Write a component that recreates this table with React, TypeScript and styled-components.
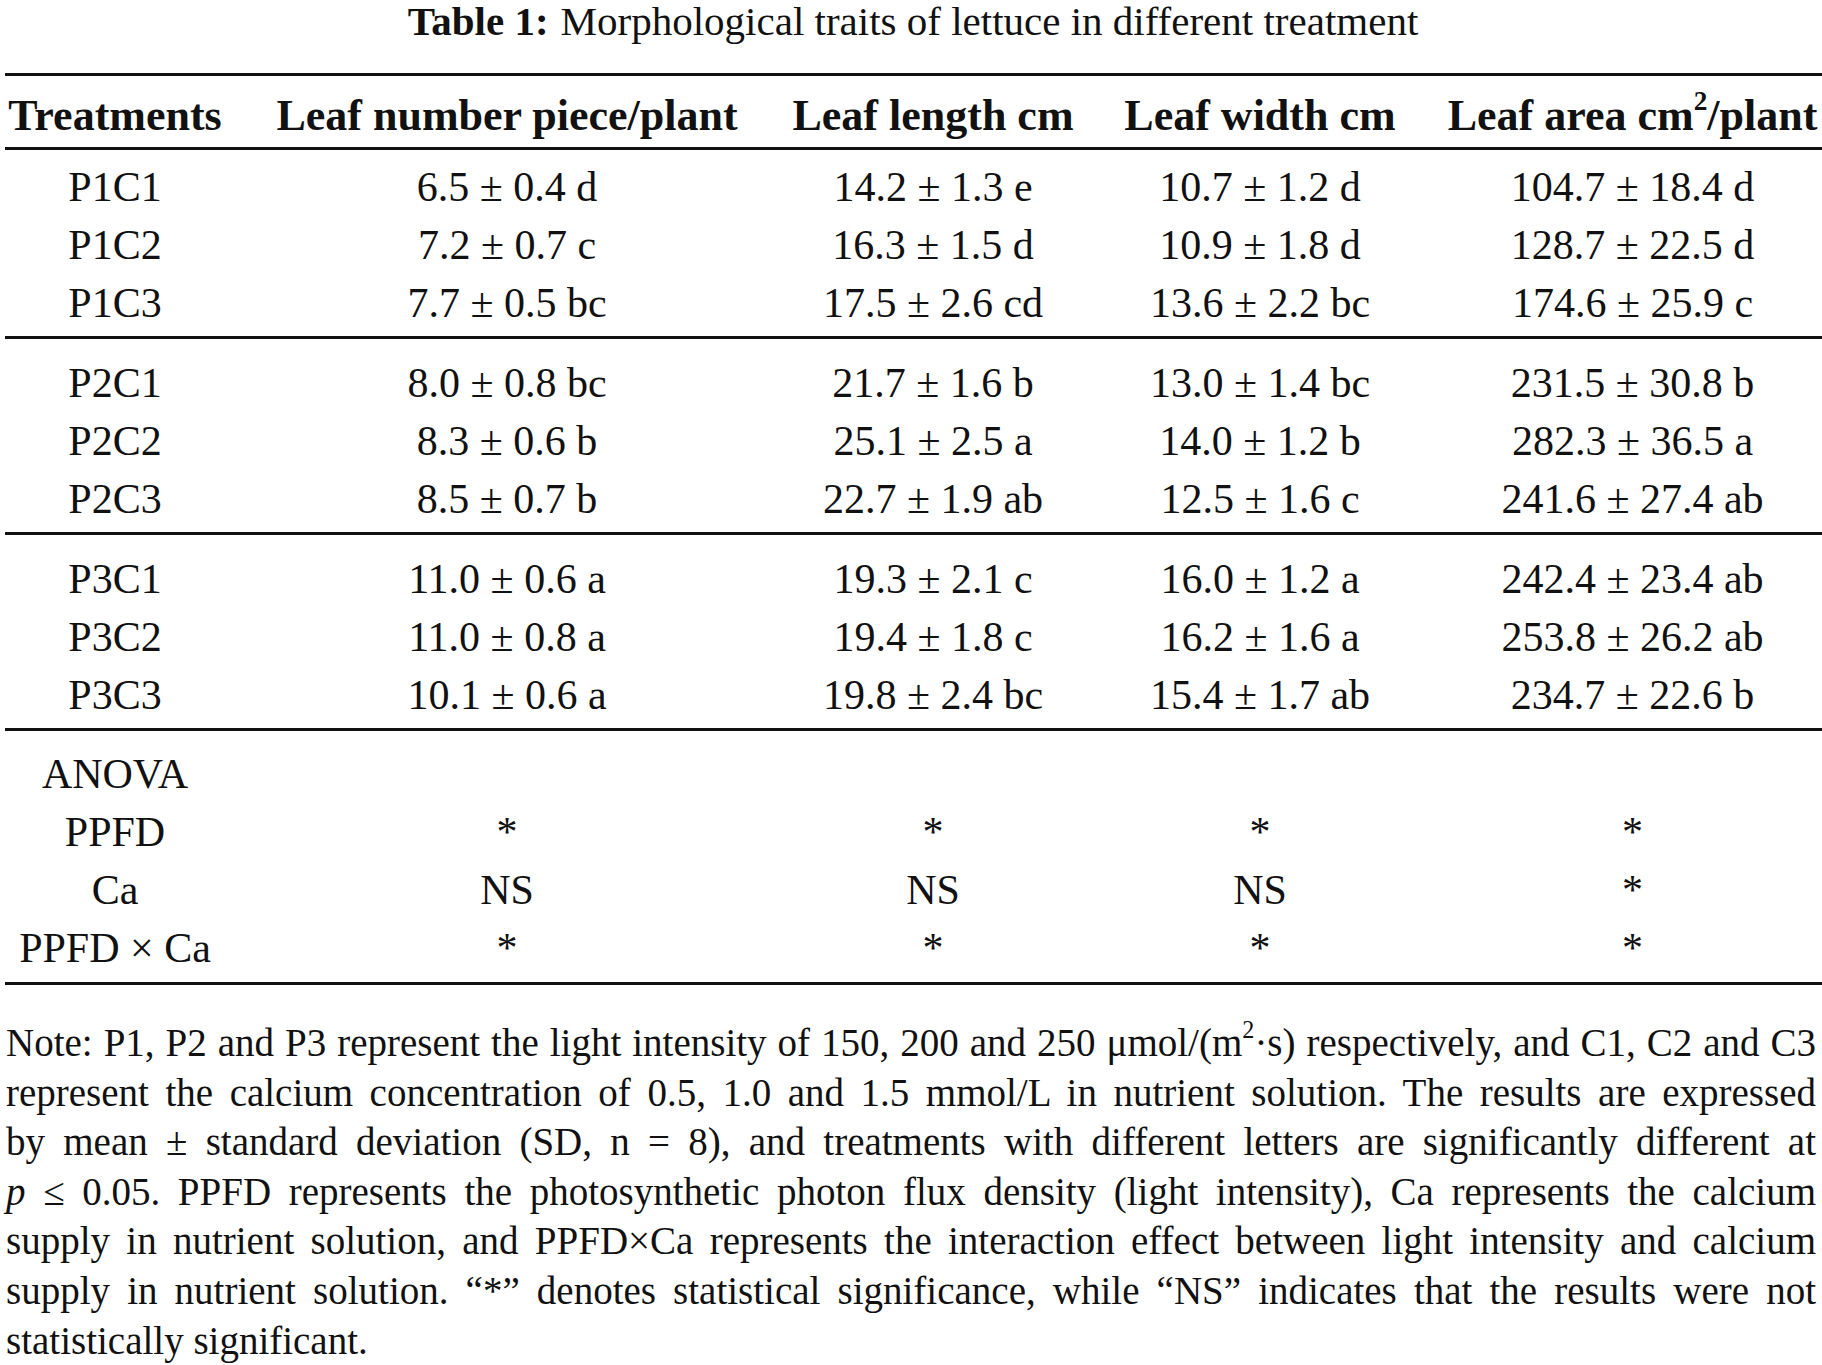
import { createGlobalStyle } from 'styled-components';
import styled from 'styled-components';

const GlobalStyle = createGlobalStyle`
  html, body {
    margin: 0;
    padding: 0;
    background: #fff;
  }
  body {
    font-family: "Liberation Serif", "Times New Roman", serif;
    color: #111;
  }
`;

const RULE = '3px solid #111';
const COLUMNS = '220px 564px 288px 366px 1fr';

const S = {
  Page: styled.div`
    width: 1822px;
    background: #fff;
  `,

  Title: styled.div`
    height: 42px;
    line-height: 42px;
    font-size: 41px;
    text-align: center;
    padding-left: 4px;
  `,

  TitleLabel: styled.span`
    font-weight: bold;
    margin-right: 12px;
  `,

  Table: styled.div`
    margin-top: 31px;
    margin-left: 5px;
    border-top: ${RULE};
  `,

  HeadRow: styled.div`
    display: grid;
    grid-template-columns: ${COLUMNS};
    height: 74px;
    box-sizing: border-box;
    padding-top: 6px;
    line-height: 68px;
    font-size: 44px;
    font-weight: bold;
    border-bottom: ${RULE};
    white-space: nowrap;
  `,

  Group: styled.div<{ $top: number; $bottom: number }>`
    padding-top: ${({ $top }) => $top}px;
    padding-bottom: ${({ $bottom }) => $bottom}px;
    border-bottom: ${RULE};
  `,

  Row: styled.div`
    display: grid;
    grid-template-columns: ${COLUMNS};
    height: 58px;
    line-height: 56px;
    font-size: 42px;
    white-space: nowrap;
  `,

  Cell: styled.div`
    text-align: center;
  `,

  Sup: styled.sup`
    font-size: 0.62em;
    line-height: 0;
    vertical-align: 0.75em;
  `,

  Note: styled.div`
    margin-top: 33px;
    padding: 0 6px;
    font-size: 39px;
    line-height: 49.6px;
  `,

  NoteLine: styled.div<{ $last?: boolean }>`
    text-align: ${({ $last }) => ($last ? 'left' : 'justify')};
    text-align-last: ${({ $last }) => ($last ? 'left' : 'justify')};
    white-space: nowrap;
  `,
};

type Group = { top: number; bottom: number; rows: string[][] };

const groups: Group[] = [
  {
    top: 9,
    bottom: 3,
    rows: [
      ['P1C1', '6.5 ± 0.4 d', '14.2 ± 1.3 e', '10.7 ± 1.2 d', '104.7 ± 18.4 d'],
      ['P1C2', '7.2 ± 0.7 c', '16.3 ± 1.5 d', '10.9 ± 1.8 d', '128.7 ± 22.5 d'],
      ['P1C3', '7.7 ± 0.5 bc', '17.5 ± 2.6 cd', '13.6 ± 2.2 bc', '174.6 ± 25.9 c'],
    ],
  },
  {
    top: 16,
    bottom: 3,
    rows: [
      ['P2C1', '8.0 ± 0.8 bc', '21.7 ± 1.6 b', '13.0 ± 1.4 bc', '231.5 ± 30.8 b'],
      ['P2C2', '8.3 ± 0.6 b', '25.1 ± 2.5 a', '14.0 ± 1.2 b', '282.3 ± 36.5 a'],
      ['P2C3', '8.5 ± 0.7 b', '22.7 ± 1.9 ab', '12.5 ± 1.6 c', '241.6 ± 27.4 ab'],
    ],
  },
  {
    top: 16,
    bottom: 3,
    rows: [
      ['P3C1', '11.0 ± 0.6 a', '19.3 ± 2.1 c', '16.0 ± 1.2 a', '242.4 ± 23.4 ab'],
      ['P3C2', '11.0 ± 0.8 a', '19.4 ± 1.8 c', '16.2 ± 1.6 a', '253.8 ± 26.2 ab'],
      ['P3C3', '10.1 ± 0.6 a', '19.8 ± 2.4 bc', '15.4 ± 1.7 ab', '234.7 ± 22.6 b'],
    ],
  },
  {
    top: 15,
    bottom: 4,
    rows: [
      ['ANOVA', '', '', '', ''],
      ['PPFD', '*', '*', '*', '*'],
      ['Ca', 'NS', 'NS', 'NS', '*'],
      ['PPFD × Ca', '*', '*', '*', '*'],
    ],
  },
];

const App = () => (
  <S.Page>
    <GlobalStyle />
    <S.Title>
      <S.TitleLabel>Table 1:</S.TitleLabel>
      Morphological traits of lettuce in different treatment
    </S.Title>

    <S.Table>
      <S.HeadRow>
        <S.Cell>Treatments</S.Cell>
        <S.Cell>Leaf number piece/plant</S.Cell>
        <S.Cell>Leaf length cm</S.Cell>
        <S.Cell>Leaf width cm</S.Cell>
        <S.Cell>
          Leaf area cm
          <S.Sup>2</S.Sup>
          /plant
        </S.Cell>
      </S.HeadRow>

      {groups.map((g, gi) => (
        <S.Group key={gi} $top={g.top} $bottom={g.bottom}>
          {g.rows.map((r) => (
            <S.Row key={r[0]}>
              {r.map((c, ci) => (
                <S.Cell key={ci}>{c}</S.Cell>
              ))}
            </S.Row>
          ))}
        </S.Group>
      ))}
    </S.Table>

    <S.Note>
      <S.NoteLine>
        Note: P1, P2 and P3 represent the light intensity of 150, 200 and 250 μmol/(m
        <S.Sup>2</S.Sup>
        ·s) respectively, and C1, C2 and C3
      </S.NoteLine>
      <S.NoteLine>
        represent the calcium concentration of 0.5, 1.0 and 1.5 mmol/L in nutrient solution. The results are expressed
      </S.NoteLine>
      <S.NoteLine>
        by mean ± standard deviation (SD, n = 8), and treatments with different letters are significantly different at
      </S.NoteLine>
      <S.NoteLine>
        <i>p</i> ≤ 0.05. PPFD represents the photosynthetic photon flux density (light intensity), Ca represents the calcium
      </S.NoteLine>
      <S.NoteLine>
        supply in nutrient solution, and PPFD×Ca represents the interaction effect between light intensity and calcium
      </S.NoteLine>
      <S.NoteLine>
        supply in nutrient solution. “*” denotes statistical significance, while “NS” indicates that the results were not
      </S.NoteLine>
      <S.NoteLine $last>statistically significant.</S.NoteLine>
    </S.Note>
  </S.Page>
);

export default App;
